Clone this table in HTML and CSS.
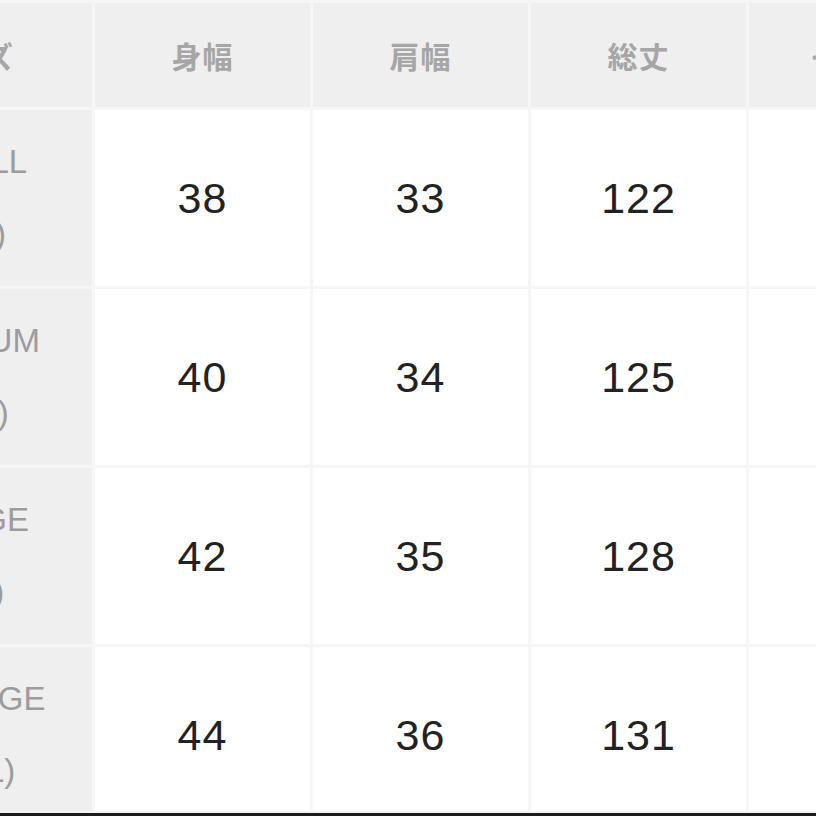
FILE: index.html
```html
<!DOCTYPE html>
<html lang="ja">
<head>
<meta charset="utf-8">
<title>サイズ表</title>
<link rel="stylesheet" href="styles.css">
</head>
<body>
<div class="frame">
  <div class="chart">
    <div class="cell head corner">サイズ</div>
    <div class="cell head">身幅</div>
    <div class="cell head">肩幅</div>
    <div class="cell head">総丈</div>
    <div class="cell head">そで丈</div>

    <div class="cell label"><span class="size">SMALL</span><span class="code">(S)</span></div>
    <div class="cell num">38</div>
    <div class="cell num">33</div>
    <div class="cell num">122</div>
    <div class="cell num">58</div>

    <div class="cell label"><span class="size">MEDIUM</span><span class="code">(M)</span></div>
    <div class="cell num">40</div>
    <div class="cell num">34</div>
    <div class="cell num">125</div>
    <div class="cell num">59</div>

    <div class="cell label"><span class="size">LARGE</span><span class="code">(L)</span></div>
    <div class="cell num">42</div>
    <div class="cell num">35</div>
    <div class="cell num">128</div>
    <div class="cell num">60</div>

    <div class="cell label"><span class="size">X-LARGE</span><span class="code">(XL)</span></div>
    <div class="cell num">44</div>
    <div class="cell num">36</div>
    <div class="cell num">131</div>
    <div class="cell num">61</div>
  </div>
</div>
<div class="edge"></div>
</body>
</html>
```
FILE: styles.css
```css
html, body {
  margin: 0;
  padding: 0;
  background: #f6f6f6;
  overflow: hidden;
}
body {
  width: 816px;
  height: 816px;
}
.frame {
  height: 811px;
  overflow: hidden;
  background: #f6f6f6;
}
.chart {
  display: grid;
  grid-template-columns: 238px 215px 215px 215px 215px;
  grid-template-rows: 104px 176px 176px 176px 176px;
  gap: 3px;
  padding-top: 3px;
  margin-left: -146px;
  width: max-content;
  background: #f6f6f6;
}
.cell {
  display: flex;
  align-items: center;
  justify-content: center;
  text-align: center;
  background: #ffffff;
}
.head {
  background: #efefef;
  color: #a6a6a6;
  font-family: "Noto Sans CJK JP", "Noto Sans", sans-serif;
  font-weight: 700;
  font-size: 30px;
  letter-spacing: 1px;
}
.corner {
  padding-right: 10px;
}
.label {
  flex-direction: column;
  background: #efefef;
  color: #9c9c9c;
  font-family: "Liberation Sans", Arial, sans-serif;
  font-size: 33px;
  line-height: 72px;
}
.code {
  padding-left: 22px;
}
.num {
  color: #222222;
  font-family: "Liberation Sans", Arial, sans-serif;
  font-size: 43px;
  letter-spacing: 1px;
}
.edge {
  height: 2px;
  background: #f3f3f3;
  border-bottom: 3px solid #1c1c1c;
}
```
